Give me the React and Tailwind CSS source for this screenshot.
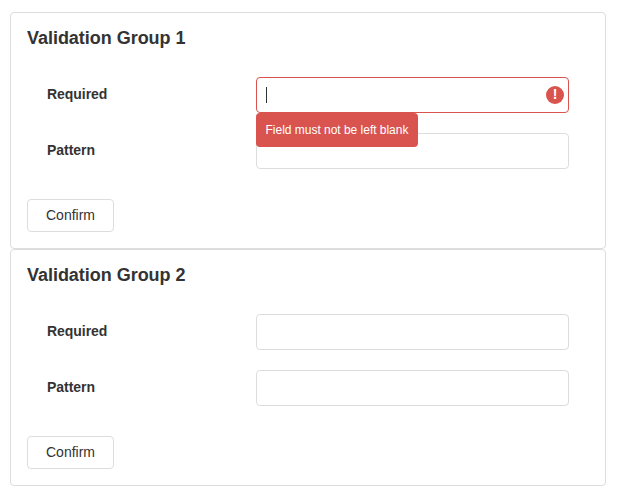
function Field({ label, error }) {
  return (
    <div className="flex h-9 items-center pl-5">
      <label className="w-[209px] pb-0.5 text-sm leading-5 font-bold tracking-[-0.04px]">{label}</label>
      <div
        className={`relative flex h-9 w-[313px] items-center rounded border bg-white ${
          error ? "z-10 border-[#d9534f]" : "border-[#dddddd]"
        }`}
      >
        {error && (
          <>
            <span className="ml-[9px] h-4 w-px bg-[#333333]" />
            <span className="mr-1 ml-auto flex size-[18px] items-center justify-center rounded-full bg-[#d9534f] pb-0.5 text-sm leading-none font-bold text-white">
              !
            </span>
            <div className="absolute top-[35px] -left-px flex h-[34px] w-[162px] items-center justify-center rounded bg-[#d9534f] text-xs tracking-[-0.02px] whitespace-nowrap text-white">
              {error}
            </div>
          </>
        )}
      </div>
    </div>
  );
}

function ValidationGroup({ title, error }) {
  return (
    <section className="h-[237px] rounded border border-[#dddddd] px-4 pt-[13px]">
      <h2 className="text-lg leading-[25px] font-bold tracking-[-0.03px]">{title}</h2>
      <div className="mt-[26px] flex flex-col gap-5">
        <Field label="Required" error={error} />
        <Field label="Pattern" />
      </div>
      <button className="mt-[30px] flex h-[33px] w-[87px] items-center justify-center rounded border border-[#dddddd] bg-white pb-0.5 text-sm leading-5">
        Confirm
      </button>
    </section>
  );
}

export default function App() {
  return (
    <main className="h-[493px] w-[618px] bg-white pt-3 pr-3 pl-2.5 font-['Liberation_Sans',Arial,sans-serif] text-[#333333]">
      <ValidationGroup title="Validation Group 1" error="Field must not be left blank" />
      <ValidationGroup title="Validation Group 2" />
    </main>
  );
}
